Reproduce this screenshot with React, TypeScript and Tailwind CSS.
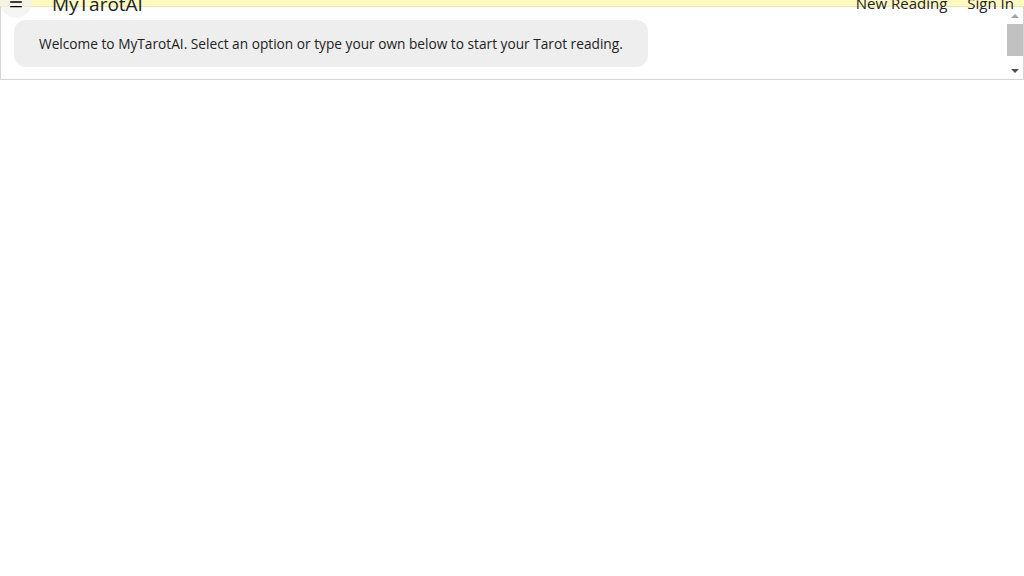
import { Menu } from 'lucide-react';

export default function App() {
  return (
    <div className="min-h-screen bg-white text-[#222] font-['Open_Sans',sans-serif]">
      {/* header, mostly scrolled out of view */}
      <header className="relative z-10 flex h-[7px] flex-col bg-[#fef9c3] border-b border-[#eee6a6]">
        <div className="-mt-[14px] flex h-8 shrink-0 items-center justify-between pr-[10px]">
          <div className="flex items-center">
            <button className="flex h-8 w-8 items-center justify-center rounded-full bg-[#f1f1f1]/70">
              <Menu size={16} strokeWidth={2} className="text-black" />
            </button>
            <span className="ml-5 mt-[4px] text-[19px] text-[#222]">MyTarotAI</span>
          </div>
          <nav className="mt-[3px] flex items-center gap-5 text-[15px] text-[#222]">
            <span>New Reading</span>
            <span>Sign In</span>
          </nav>
        </div>
      </header>

      <div className="flex h-[73px] border border-t-0 border-[#d4d4d4]">
        <div className="flex-1 overflow-hidden pl-[13px] pt-[13px]">
          <div className="inline-block rounded-xl bg-[#eeeeee] px-[25px] py-[13px] text-[13.7px] leading-[21px]">
            Welcome to MyTarotAI. Select an option or type your own below to start your Tarot reading.
          </div>
        </div>
        <div className="flex w-[16px] flex-col items-center bg-white">
          <div className="flex h-[17px] w-full items-center justify-center">
            <div className="h-0 w-0 border-x-[4px] border-b-[4px] border-x-transparent border-b-[#a3a3a3]" />
          </div>
          <div className="h-[32px] w-full bg-[#c1c1c1]" />
          <div className="flex-1" />
          <div className="flex h-[17px] w-full items-center justify-center">
            <div className="h-0 w-0 border-x-[4px] border-t-[4px] border-x-transparent border-t-[#505050]" />
          </div>
        </div>
      </div>
    </div>
  );
}
